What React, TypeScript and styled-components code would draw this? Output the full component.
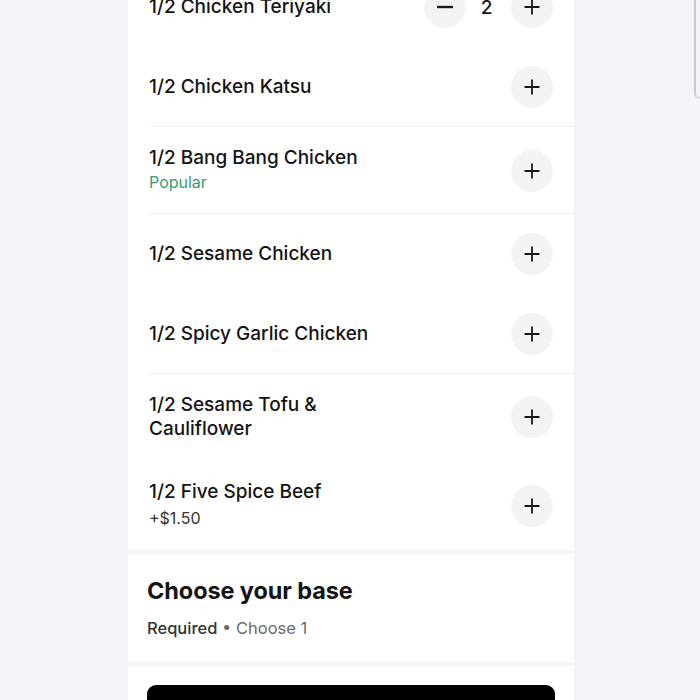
import React from 'react';
import styled, { createGlobalStyle } from 'styled-components';

const GlobalStyle = createGlobalStyle`
  html, body {
    margin: 0;
    padding: 0;
    background: #f3f4f8;
    overflow: hidden;
  }
  body {
    font-family: Inter, "Noto Sans", "Liberation Sans", sans-serif;
    color: #141414;
  }
`;

const Page = styled.div`
  position: relative;
  width: 700px;
  height: 700px;
  padding-left: 2px;
  box-sizing: border-box;
  overflow: hidden;
  display: flex;
  justify-content: center;
`;

// the list is scrolled a little, so the first row is cut at the top
const Column = styled.div`
  width: 446px;
  margin-top: -33px;
  display: flex;
  flex-direction: column;
  gap: 4px;
`;

const Section = styled.section`
  background: #ffffff;
`;

const Row = styled.div<{ $divider?: boolean }>`
  display: flex;
  align-items: center;
  justify-content: space-between;
  padding: 19px 21px;
  position: relative;

  &:last-child {
    padding-top: 20px;
  }

  &::after {
    content: '';
    display: ${(p) => (p.$divider ? 'block' : 'none')};
    position: absolute;
    left: 21px;
    right: 0;
    bottom: 0;
    height: 1px;
    background: #f0f0f0;
  }
`;

const Info = styled.div`
  display: flex;
  flex-direction: column;
  max-width: 240px;
`;

const Title = styled.span`
  font-size: 19px;
  line-height: 24px;
  font-weight: 500;
`;

const Sub = styled.span<{ $green?: boolean; $gap?: number }>`
  font-size: 16px;
  line-height: 25px;
  margin-top: ${(p) => p.$gap ?? 0}px;
  color: ${(p) => (p.$green ? '#3a9c6c' : '#333333')};
`;

const Stepper = styled.div`
  display: flex;
  align-items: center;
`;

const Count = styled.span`
  width: 45px;
  text-align: center;
  font-size: 19px;
  font-weight: 500;
  padding-right: 4px;
  box-sizing: border-box;
`;

const RoundButton = styled.button`
  width: 42px;
  height: 42px;
  border-radius: 50%;
  border: none;
  background: #f3f3f3;
  display: flex;
  align-items: center;
  justify-content: center;
  padding: 0;
  flex-shrink: 0;
  color: #1a1a1a;
`;

const Heading = styled.div`
  padding: 22px 19px 23px;
  display: flex;
  flex-direction: column;
  gap: 11px;
`;

const HeadingTitle = styled.h2`
  margin: 0;
  font-size: 23.5px;
  line-height: 30px;
  font-weight: 700;
  letter-spacing: -0.1px;
`;

const Meta = styled.div`
  font-size: 16.5px;
  line-height: 22px;
  color: #6b6b6b;
`;

const Required = styled.span`
  color: #333333;
  font-weight: 500;
`;

const Footer = styled(Section)`
  padding: 19px 19px 20px;
`;

const CartButton = styled.button`
  width: 100%;
  height: 56px;
  border: none;
  border-radius: 9px;
  background: #000000;
`;

const ScrollThumb = styled.div`
  position: absolute;
  top: -10px;
  right: -2px;
  width: 6px;
  height: 107px;
  border-left: 2px solid #c9cacf;
  border-bottom: 2px solid #d6d7db;
  border-bottom-left-radius: 6px;
`;

const Plus = () => (
  <svg width="18" height="18" viewBox="0 0 18 18">
    <path d="M9 1.5v15M1.5 9h15" stroke="currentColor" strokeWidth="1.8" />
  </svg>
);

const Minus = () => (
  <svg width="18" height="18" viewBox="0 0 18 18">
    <path d="M1 9h16" stroke="currentColor" strokeWidth="2.4" />
  </svg>
);

interface Option {
  title: string;
  sub?: string;
  green?: boolean;
  divider?: boolean;
  count?: number;
  subGap?: number;
}

const options: Option[] = [
  { title: '1/2 Chicken Teriyaki', count: 2 },
  { title: '1/2 Chicken Katsu', divider: true },
  { title: '1/2 Bang Bang Chicken', sub: 'Popular', green: true, divider: true },
  { title: '1/2 Sesame Chicken' },
  { title: '1/2 Spicy Garlic Chicken', divider: true },
  { title: '1/2 Sesame Tofu & Cauliflower' },
  { title: '1/2 Five Spice Beef', sub: '+$1.50', subGap: 2 },
];

const App: React.FC = () => {
  return (
    <Page>
      <GlobalStyle />
      <Column>
        <Section>
          {options.map((o) => (
            <Row key={o.title} $divider={o.divider}>
              <Info>
                <Title>{o.title}</Title>
                {o.sub && (
                  <Sub $green={o.green} $gap={o.subGap}>
                    {o.sub}
                  </Sub>
                )}
              </Info>
              {o.count ? (
                <Stepper>
                  <RoundButton aria-label="remove">
                    <Minus />
                  </RoundButton>
                  <Count>{o.count}</Count>
                  <RoundButton aria-label="add">
                    <Plus />
                  </RoundButton>
                </Stepper>
              ) : (
                <RoundButton aria-label="add">
                  <Plus />
                </RoundButton>
              )}
            </Row>
          ))}
        </Section>
        <Section>
          <Heading>
            <HeadingTitle>Choose your base</HeadingTitle>
            <Meta>
              <Required>Required</Required> • Choose 1
            </Meta>
          </Heading>
        </Section>
        <Footer>
          <CartButton aria-label="Add to order" />
        </Footer>
      </Column>
      <ScrollThumb />
    </Page>
  );
};

export default App;
